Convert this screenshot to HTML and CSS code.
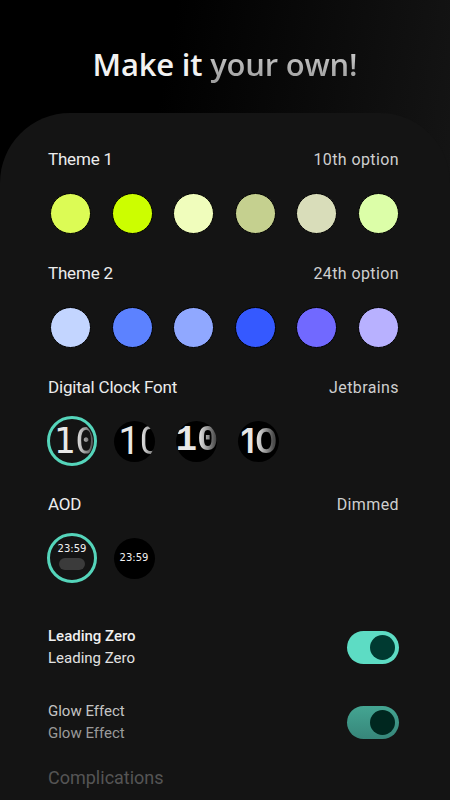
FILE: index.html
```html
<!DOCTYPE html>
<html lang="en">

<head>
  <meta charset="UTF-8" />
  <title>Make it your own</title>
  <meta name="viewport" content="width=device-width, initial-scale=1.0" />
  <link rel="stylesheet" href="styles.css">
</head>

<body>
  <h1 class="title">Make it <span class="title-soft">your own!</span></h1>

  <main class="card">
    <div class="section-head">
      <span class="label">Theme 1</span>
      <span class="value">10th option</span>
    </div>
    <div class="swatches">
      <span class="swatch" style="background:#dcfb55"></span>
      <span class="swatch" style="background:#ccfe00"></span>
      <span class="swatch" style="background:#f0fdbc"></span>
      <span class="swatch" style="background:#c5d08f"></span>
      <span class="swatch" style="background:#d9ddba"></span>
      <span class="swatch" style="background:#dcfea8"></span>
    </div>

    <div class="section-head">
      <span class="label">Theme 2</span>
      <span class="value">24th option</span>
    </div>
    <div class="swatches">
      <span class="swatch" style="background:#c3d5ff"></span>
      <span class="swatch" style="background:#5c82ff"></span>
      <span class="swatch" style="background:#90a8ff"></span>
      <span class="swatch" style="background:#3559ff"></span>
      <span class="swatch" style="background:#7169ff"></span>
      <span class="swatch" style="background:#b8b1ff"></span>
    </div>

    <div class="section-head">
      <span class="label">Digital Clock Font</span>
      <span class="value">Jetbrains</span>
    </div>
    <div class="options">
      <div class="option selected"><span class="face font-mono">1<span class="fade">0</span></span></div>
      <div class="option"><span class="face font-roboto">1<span class="fade">0</span></span></div>
      <div class="option"><span class="face font-liber">1<span class="fade">0</span></span></div>
      <div class="option"><span class="face font-inter">1<span class="fade">0</span></span></div>
    </div>

    <div class="section-head head-tall">
      <span class="label">AOD</span>
      <span class="value">Dimmed</span>
    </div>
    <div class="options">
      <div class="option selected">
        <span class="aod">
          <span class="aod-time">23:59</span>
          <span class="aod-pill"></span>
        </span>
      </div>
      <div class="option">
        <span class="aod"><span class="aod-time">23:59</span></span>
      </div>
    </div>

    <div class="toggle-row first">
      <div class="toggle-text">
        <div class="toggle-title">Leading Zero</div>
        <div class="toggle-sub">Leading Zero</div>
      </div>
      <span class="switch"><span class="knob"></span></span>
    </div>

    <div class="toggle-row dim">
      <div class="toggle-text">
        <div class="toggle-title">Glow Effect</div>
        <div class="toggle-sub">Glow Effect</div>
      </div>
      <span class="switch"><span class="knob"></span></span>
    </div>

    <div class="muted-head">Complications</div>
  </main>
</body>

</html>
```

FILE: styles.css
```css
* {
  box-sizing: border-box;
  margin: 0;
  padding: 0;
}

body {
  font-family: 'Open Sans', sans-serif;
  background: linear-gradient(100deg, #000 30%, #1c1c1c);
  width: 450px;
  height: 800px;
  overflow: hidden;
  color: #eee;
}

.title {
  height: 113px;
  padding-top: 43px;
  text-align: center;
  font-family: 'Open Sans', sans-serif;
  font-size: 31px;
  font-weight: 600;
  letter-spacing: -0.2px;
  line-height: 42px;
  color: #f2f2f2;
}

.title-soft {
  background: linear-gradient(180deg, #d4d4d4, #9a9a9a);
  -webkit-background-clip: text;
  background-clip: text;
  color: transparent;
}

.card {
  height: 687px;
  background: #141414;
  border-radius: 70px 70px 0 0;
  padding: 34px 51px 0 48px;
  font-family: 'Roboto', sans-serif;
}

.section-head {
  display: flex;
  justify-content: space-between;
  align-items: center;
  height: 24px;
}

.label {
  font-size: 17px;
  color: #ececec;
  letter-spacing: -0.2px;
}

.value {
  font-size: 16px;
  color: #cfcfcf;
  letter-spacing: 0.4px;
}

.swatches {
  display: flex;
  justify-content: space-between;
  padding-left: 2px;
  margin: 22px 0 27px;
}

.swatch {
  width: 41px;
  height: 41px;
  border-radius: 50%;
  border: 1px solid #000;
}

.head-tall {
  margin-top: 1px;
}

.options {
  display: flex;
  gap: 12px;
  margin: 17px 0 26px -1px;
}

.option {
  width: 50px;
  height: 50px;
  display: flex;
  align-items: center;
  justify-content: center;
}

.option.selected {
  border: 3px solid #55d5bb;
  border-radius: 50%;
}

.face {
  width: 41px;
  height: 41px;
  border-radius: 50%;
  background: #000;
  overflow: hidden;
  display: flex;
  align-items: center;
  padding-left: 4px;
  font-size: 36px;
  font-weight: 400;
  color: #e8e8e8;
  white-space: nowrap;
  line-height: 1;
}

.selected .face {
  background: #141414;
}

.fade {
  background: linear-gradient(90deg, #d8d8d8 15%, #4a4a4a 85%);
  -webkit-background-clip: text;
  background-clip: text;
  color: transparent;
}

.font-mono {
  font-family: 'DejaVu Sans Mono', monospace;
  font-size: 36px;
  padding-left: 2px;
}

.font-roboto {
  font-family: 'Roboto', sans-serif;
  font-size: 38px;
  padding-left: 5px;
}

.font-liber {
  font-family: 'Liberation Mono', monospace;
  font-size: 36px;
  font-weight: 700;
  padding-left: 0;
}

.font-inter {
  font-family: 'Inter', sans-serif;
  font-weight: 600;
  font-size: 34px;
  padding-left: 3px;
}

.aod {
  width: 41px;
  height: 41px;
  border-radius: 50%;
  background: #000;
  display: flex;
  flex-direction: column;
  align-items: center;
  justify-content: center;
  gap: 3px;
}

.selected .aod {
  background: #141414;
  justify-content: flex-start;
  padding-top: 5px;
}

.aod-time {
  font-family: 'DejaVu Sans', sans-serif;
  font-size: 10px;
  color: #f2f2f2;
  line-height: 12px;
}

.aod-pill {
  width: 26px;
  height: 12px;
  border-radius: 6px;
  background: #3b3b3b;
}

.toggle-row {
  display: flex;
  justify-content: space-between;
  align-items: center;
  margin-top: 32px;
}

.toggle-row.first {
  margin-top: 43px;
}

.toggle-title {
  font-size: 15px;
  font-weight: 500;
  line-height: 21px;
  color: #f0f0f0;
}

.toggle-sub {
  font-size: 15px;
  line-height: 22px;
  color: #e2e2e2;
}

.switch {
  width: 52px;
  height: 33px;
  border-radius: 17px;
  background: #5ddcc4;
  display: flex;
  align-items: center;
  justify-content: flex-end;
  padding-right: 4px;
}

.knob {
  width: 25px;
  height: 25px;
  border-radius: 50%;
  background: #003a31;
}

.dim .toggle-title {
  font-weight: 400;
  color: #c4c4c4;
}

.dim .toggle-sub {
  color: #9a9a9a;
}

.dim .switch {
  background: linear-gradient(180deg, #44a592, #37867a);
}

.dim .knob {
  background: #00271f;
}

.muted-head {
  margin-top: 22px;
  font-size: 18px;
  line-height: 24px;
  color: #555;
}
```
